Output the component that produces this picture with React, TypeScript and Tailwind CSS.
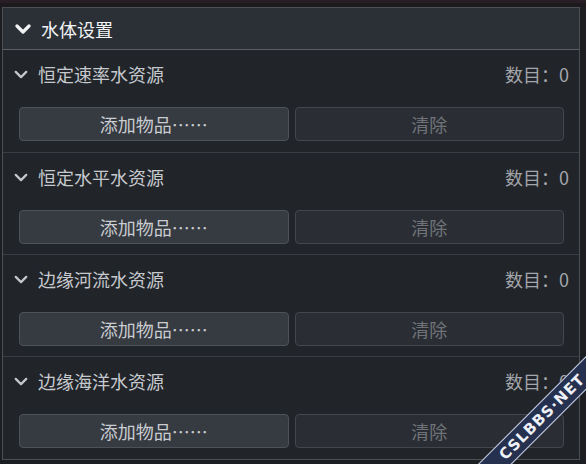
const items = [
  { name: '恒定速率水资源', count: 0, h: 'h-[103px]' },
  { name: '恒定水平水资源', count: 0, h: 'h-[102px]' },
  { name: '边缘河流水资源', count: 0, h: 'h-[102px]' },
  { name: '边缘海洋水资源', count: 0, h: 'h-[102px]' },
];

const Chevron = ({ className, width = 3 }: { className?: string; width?: number }) => (
  <svg viewBox="0 0 16 10" className={className} fill="none">
    <polyline
      points="2,2 8,8 14,2"
      stroke="currentColor"
      strokeWidth={width}
      strokeLinecap="round"
      strokeLinejoin="round"
    />
  </svg>
);

const Section = ({
  name,
  count,
  h,
  last,
}: {
  name: string;
  count: number;
  h: string;
  last?: boolean;
}) => (
  <div className={`${h} flex flex-col ${last ? '' : 'border-b border-[#3a3e44]'}`}>
    <div className="h-[48px] flex items-center pl-[11px] pr-[10px]">
      <Chevron className="w-[14px] h-[9px] text-[#c3c6cb]" width={2.6} />
      <span className="ml-[10px] text-[18px] leading-none text-[#c6c9ce]">{name}</span>
      <span className="ml-auto text-[18px] leading-none text-[#a3a6ab]">数目：{count}</span>
    </div>
    <div className="mt-[9px] grid grid-cols-2 gap-[6px] pl-[16px] pr-[15px]">
      <button className="h-[34px] rounded-[4px] border border-[#4d5158] bg-[#363a41] text-[18px] text-[#c9ccd0] flex items-center justify-center">
        添加物品……
      </button>
      <button
        disabled
        className="h-[34px] rounded-[4px] border border-[#43474d] bg-[#2a2e34] text-[18px] text-[#6f7378] flex items-center justify-center"
      >
        清除
      </button>
    </div>
  </div>
);

export default function App() {
  return (
    <div
      className="relative w-[586px] h-[464px] overflow-hidden bg-[#1c1e22]"
      style={{ fontFamily: '"Noto Sans CJK SC", "Noto Sans", sans-serif' }}
    >
      <div className="h-[7px] bg-[#1d191d] border-t-[3px] border-[#271f25]" />
      <div className="ml-[2px] w-[578px] border border-[#4b4f56] bg-[#212428]">
        <div className="h-[42px] flex items-center pl-[12px] bg-[#2b3037] border-b border-[#5c6066]">
          <Chevron className="w-[16px] h-[10px] text-[#f2f3f4]" width={3.2} />
          <span className="ml-[10px] text-[18px] leading-none text-[#f3f4f5]">水体设置</span>
        </div>
        {items.map((item, i) => (
          <Section key={item.name} {...item} last={i === items.length - 1} />
        ))}
      </div>

      {/* watermark ribbon */}
      <div className="absolute left-[392px] top-[405px] w-[300px] h-[24px] -rotate-45 bg-[#263150] border-y border-[#c9d0e0] flex items-center justify-center">
        <span
          className="text-[15px] font-bold tracking-[1px] text-[#eef1f7] leading-none"
          style={{ fontFamily: '"DejaVu Sans", sans-serif' }}
        >
          CSLBBS·NET
        </span>
      </div>
    </div>
  );
}
